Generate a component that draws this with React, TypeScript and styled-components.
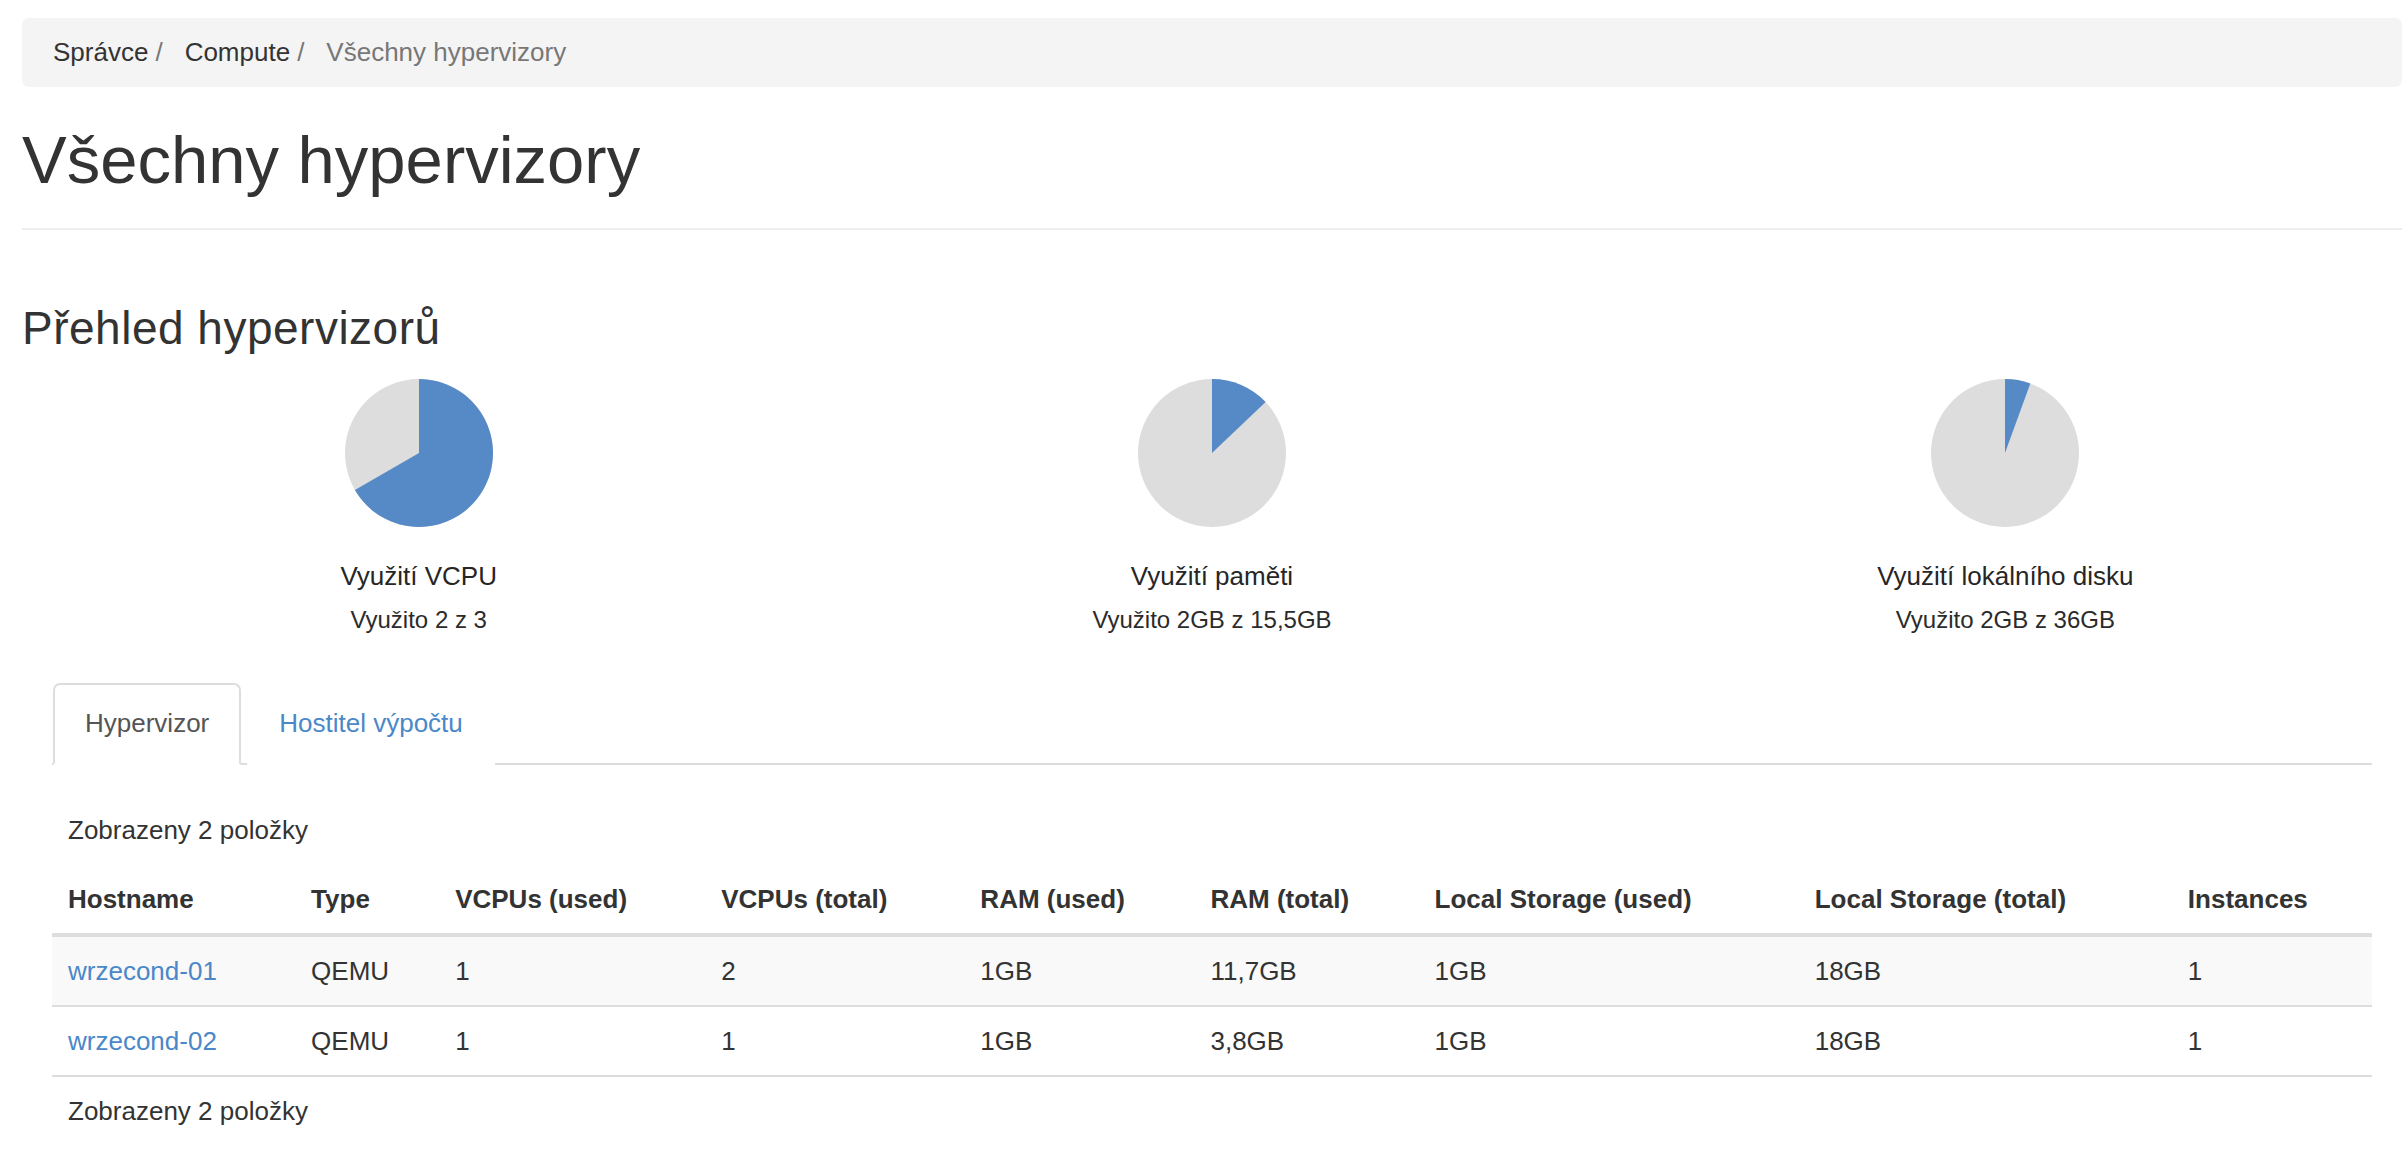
import React from "react";
import styled, { createGlobalStyle } from "styled-components";

const GlobalStyle = createGlobalStyle`
  html, body {
    margin: 0;
    padding: 0;
    background: #ffffff;
  }
  body {
    font-family: "Liberation Sans", Arial, Helvetica, sans-serif;
    color: #333333;
    font-size: 26px;
    line-height: 37px;
  }
  * { box-sizing: border-box; }
`;

const Page = styled.div`
  padding: 18px 6px 30px 22px;
`;

const Breadcrumb = styled.nav`
  display: flex;
  align-items: center;
  background: #f4f4f4;
  border-radius: 7px;
  padding: 16px 28px 16px 31px;
  font-size: 26px;
  line-height: 37px;
`;

const Crumb = styled.span<{ $active?: boolean }>`
  color: ${(p) => (p.$active ? "#777777" : "#333333")};
`;

const Sep = styled.span`
  color: #777777;
  margin: 0 22px 0 7px;
`;

const PageHeader = styled.h1`
  margin: 36px 0 0;
  padding-bottom: 31px;
  border-bottom: 2px solid #eeeeee;
  font-size: 67px;
  line-height: 74px;
  font-weight: 400;
  color: #333333;
`;

const SectionTitle = styled.h3`
  margin: 73px 0 0;
  font-size: 46px;
  line-height: 50px;
  letter-spacing: 0.5px;
  font-weight: 400;
  color: #333333;
`;

const Charts = styled.div`
  display: grid;
  grid-template-columns: repeat(3, 1fr);
  margin-top: 26px;
`;

const ChartCol = styled.div`
  display: flex;
  flex-direction: column;
  align-items: center;
`;

const PieSvg = styled.svg`
  width: 148px;
  height: 148px;
  display: block;
`;

const ChartTitle = styled.div`
  margin-top: 31px;
  font-size: 26px;
  line-height: 37px;
  color: #262626;
`;

const ChartSub = styled.div`
  margin-top: 8px;
  font-size: 24px;
  line-height: 34px;
  color: #2b2b2b;
`;

const TabSection = styled.div`
  margin: 46px 30px 0 30px;
`;

const Tabs = styled.ul`
  display: flex;
  list-style: none;
  margin: 0;
  padding: 0 0 0 1px;
  border-bottom: 2px solid #dddddd;
`;

const TabItem = styled.li`
  margin: 0 6px -2px 0;
`;

const TabLink = styled.a<{ $active?: boolean }>`
  display: block;
  padding: 20px 30px 21px;
  font-size: 26px;
  line-height: 37px;
  text-decoration: none;
  cursor: pointer;
  border: 2px solid ${(p) => (p.$active ? "#dddddd" : "transparent")};
  border-bottom-color: ${(p) => (p.$active ? "#ffffff" : "transparent")};
  border-radius: 7px 7px 0 0;
  background: #ffffff;
  color: ${(p) => (p.$active ? "#555555" : "#4a88c8")};
`;

const TabContent = styled.div`
  padding-top: 32px;
`;

const Caption = styled.div`
  padding: 15px 16px 17px;
  font-size: 26px;
  line-height: 37px;
`;

const Table = styled.table`
  width: 100%;
  table-layout: fixed;
  border-collapse: separate;
  border-spacing: 0;
  font-size: 26px;
  line-height: 37px;
`;

const Th = styled.th<{ $w: number }>`
  width: ${(p) => p.$w}px;
  text-align: left;
  font-weight: 700;
  padding: 15px 16px;
  border-bottom: 4px solid #dddddd;
  color: #333333;
  white-space: nowrap;
`;

const Row = styled.tr<{ $striped?: boolean; $first?: boolean }>`
  background: ${(p) => (p.$striped ? "#f9f9f9" : "#ffffff")};
  & > td {
    border-top: ${(p) => (p.$first ? "0" : "2px solid #dddddd")};
  }
`;

const Td = styled.td`
  padding: 16px 16px 15px;
  color: #333333;
  white-space: nowrap;
`;

const HostLink = styled.a`
  color: #4a88c8;
  text-decoration: none;
`;

const FooterTd = styled.td`
  padding: 16px 16px 15px;
  border-top: 2px solid #dddddd;
  color: #333333;
`;

type PieProps = { fraction: number };

const Pie: React.FC<PieProps> = ({ fraction }) => {
  const a = 2 * Math.PI * fraction;
  const x = Math.sin(a);
  const y = -Math.cos(a);
  const large = fraction > 0.5 ? 1 : 0;
  const d = `M0 0 L0 -1 A1 1 0 ${large} 1 ${x.toFixed(5)} ${y.toFixed(5)} Z`;
  return (
    <PieSvg viewBox="-1 -1 2 2">
      <circle cx="0" cy="0" r="1" fill="#dddddd" />
      <path d={d} fill="#568ac6" />
    </PieSvg>
  );
};

const charts = [
  { title: "Využití VCPU", sub: "Využito 2 z 3", f: 2 / 3 },
  { title: "Využití paměti", sub: "Využito 2GB z 15,5GB", f: 2 / 15.5 },
  { title: "Využití lokálního disku", sub: "Využito 2GB z 36GB", f: 2 / 36 },
];

const columns = [
  { label: "Hostname", w: 243 },
  { label: "Type", w: 144 },
  { label: "VCPUs (used)", w: 266 },
  { label: "VCPUs (total)", w: 259 },
  { label: "RAM (used)", w: 230 },
  { label: "RAM (total)", w: 224 },
  { label: "Local Storage (used)", w: 380 },
  { label: "Local Storage (total)", w: 373 },
  { label: "Instances", w: 200 },
];

const rows = [
  ["wrzecond-01", "QEMU", "1", "2", "1GB", "11,7GB", "1GB", "18GB", "1"],
  ["wrzecond-02", "QEMU", "1", "1", "1GB", "3,8GB", "1GB", "18GB", "1"],
];

export default function App() {
  return (
    <>
      <GlobalStyle />
      <Page>
        <Breadcrumb>
          <Crumb>Správce</Crumb>
          <Sep>/</Sep>
          <Crumb>Compute</Crumb>
          <Sep>/</Sep>
          <Crumb $active>Všechny hypervizory</Crumb>
        </Breadcrumb>

        <PageHeader>Všechny hypervizory</PageHeader>

        <SectionTitle>Přehled hypervizorů</SectionTitle>

        <Charts>
          {charts.map((c) => (
            <ChartCol key={c.title}>
              <Pie fraction={c.f} />
              <ChartTitle>{c.title}</ChartTitle>
              <ChartSub>{c.sub}</ChartSub>
            </ChartCol>
          ))}
        </Charts>

        <TabSection>
          <Tabs>
            <TabItem>
              <TabLink $active>Hypervizor</TabLink>
            </TabItem>
            <TabItem>
              <TabLink>Hostitel výpočtu</TabLink>
            </TabItem>
          </Tabs>
          <TabContent>
            <Caption>Zobrazeny 2 položky</Caption>
            <Table>
              <thead>
                <tr>
                  {columns.map((c) => (
                    <Th key={c.label} $w={c.w}>
                      {c.label}
                    </Th>
                  ))}
                </tr>
              </thead>
              <tbody>
                {rows.map((r, i) => (
                  <Row key={r[0]} $striped={i % 2 === 0} $first={i === 0}>
                    {r.map((cell, j) => (
                      <Td key={j}>
                        {j === 0 ? <HostLink>{cell}</HostLink> : cell}
                      </Td>
                    ))}
                  </Row>
                ))}
              </tbody>
              <tfoot>
                <tr>
                  <FooterTd colSpan={9}>Zobrazeny 2 položky</FooterTd>
                </tr>
              </tfoot>
            </Table>
          </TabContent>
        </TabSection>
      </Page>
    </>
  );
}
